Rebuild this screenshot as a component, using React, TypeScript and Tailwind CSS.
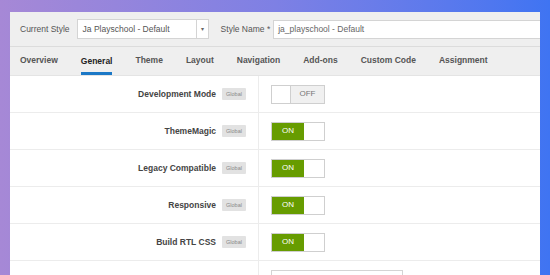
import React from 'react';

const tabs = ['Overview', 'General', 'Theme', 'Layout', 'Navigation', 'Add-ons', 'Custom Code', 'Assignment'];

const rows = [
  { label: 'Development Mode', on: false },
  { label: 'ThemeMagic', on: true },
  { label: 'Legacy Compatible', on: true },
  { label: 'Responsive', on: true },
  { label: 'Build RTL CSS', on: true },
];

const Toggle = ({ on }: { on: boolean }) => (
  <div className="flex h-[19px] w-[54px] border border-[#cfcfcf] text-[8px] leading-none">
    {on ? (
      <>
        <div className="flex w-[32px] items-center justify-center bg-[#679c00] text-white">ON</div>
        <div className="flex-1 bg-white" />
      </>
    ) : (
      <>
        <div className="w-[19px] border-r border-[#cfcfcf] bg-white" />
        <div className="flex flex-1 items-center justify-center bg-[#f0f0f0] text-[#777]">OFF</div>
      </>
    )}
  </div>
);

const Badge = () => (
  <span className="flex h-[12px] w-[24px] items-center justify-center rounded-[1px] bg-[#e2e2e2] text-[5.5px] text-[#888]">
    Global
  </span>
);

export default function App() {
  return (
    <div className="h-[275px] w-[550px] overflow-hidden whitespace-nowrap bg-gradient-to-r from-[#a688d6] via-[#7e80e4] to-[#3f74f2] pl-[10px] pt-[12px] font-[family-name:'Liberation_Sans',Arial,sans-serif]">
      <div className="w-[530px] bg-white">
        {/* style header */}
        <div className="flex h-[35px] items-center border-b border-[#dcdcdc] bg-[#efefef] pl-[10px] text-[8.5px] text-[#555]">
          <span>Current Style</span>
          <div className="ml-[7px] flex h-[20px] w-[132px] border border-[#d4d4d4] bg-white">
            <span className="flex-1 pl-[5px] leading-[18px]">Ja Playschool - Default</span>
            <span className="flex w-[12px] items-center justify-center border-l border-[#d4d4d4] text-[6px] text-[#666]">▾</span>
          </div>
          <span className="ml-[12px]">Style Name *</span>
          <div className="ml-[3px] h-[19px] flex-1 border-y border-l border-[#d4d4d4] bg-white pl-[4px] text-[8.5px] leading-[17px] text-[#666]">
            ja_playschool - Default
          </div>
        </div>

        {/* tabs */}
        <div className="flex h-[29px] items-stretch gap-[23px] border-b border-[#e4e4e4] bg-[#efefef] pl-[10px] text-[8.5px] font-bold">
          {tabs.map((t) => (
            <div
              key={t}
              className={
                t === 'General'
                  ? 'flex items-center border-b-[3px] border-[#1b78c6] pt-[3px] text-[#222]'
                  : 'flex items-center pb-[1px] text-[#555]'
              }
            >
              {t}
            </div>
          ))}
        </div>

        {/* settings */}
        {rows.map((r) => (
          <div key={r.label} className="flex h-[37px] border-b border-[#ececec]">
            <div className="flex w-[249px] items-center justify-end gap-[6px] border-r border-[#ececec] pr-[12px]">
              <span className="text-[8.5px] font-bold text-[#444]">{r.label}</span>
              <Badge />
            </div>
            <div className="flex items-center pl-[12px]">
              <Toggle on={r.on} />
            </div>
          </div>
        ))}
        <div className="flex h-[37px]">
          <div className="flex w-[249px] items-start justify-end gap-[6px] border-r border-[#ececec] pr-[12px] pt-[14px]">
            <span className="text-[8.5px] font-bold text-[#444]">T3 Assets Folder</span>
            <Badge />
          </div>
          <div className="pl-[12px] pt-[9px]">
            <div className="h-[22px] w-[132px] border border-[#d4d4d4] pl-[5px] text-[8.5px] leading-[20px] text-[#666]">
              Default
            </div>
          </div>
        </div>
      </div>
    </div>
  );
}
